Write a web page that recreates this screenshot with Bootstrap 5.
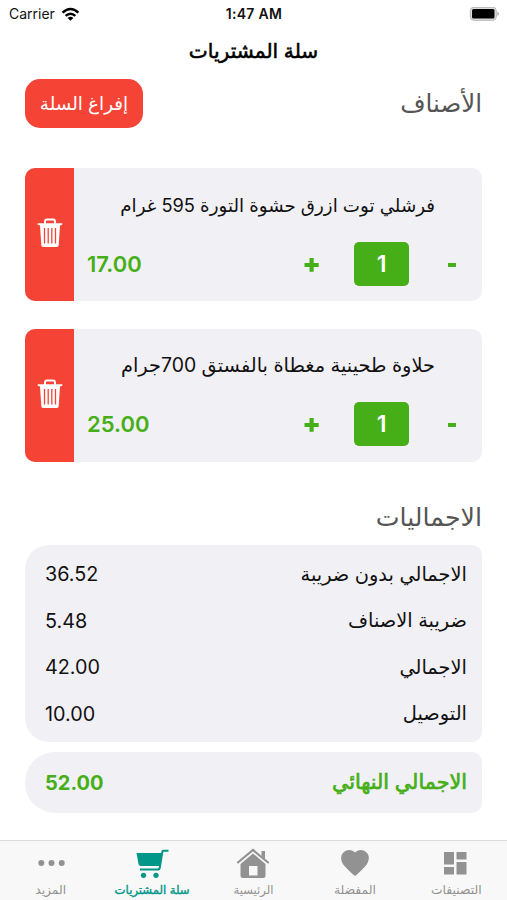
<!DOCTYPE html>
<html lang="ar" dir="rtl">
<head>
<meta charset="utf-8">
<meta name="viewport" content="width=device-width, initial-scale=1">
<title>سلة المشتريات</title>
<link href="https://cdn.jsdelivr.net/npm/bootstrap@5.3.0/dist/css/bootstrap.min.css" rel="stylesheet">
<style>
body{font-family:Inter,"DejaVu Sans",sans-serif;height:900px;color:#111;background:#fff;overflow:hidden;line-height:1}
svg{display:block;flex:none}
.statusbar{height:28px;font-size:14px;padding:0 8px 0 9px}
.statusbar>div{flex:1 1 0}
.carrier{gap:6px}
.clock{letter-spacing:.3px}
.page-title{height:47px;font-size:20.2px;font-weight:400;color:#000;-webkit-text-stroke:.55px currentColor}
.content{padding:4px 25px 0}
.section-title{font-size:24.5px;color:#555;font-weight:400}
.summary-title{height:83px;padding-top:27px;font-size:25.3px}
.btn-empty{width:118px;height:49px;border-radius:15px;background:#f54336;color:#fff;font-size:18.4px;padding:0}
.btn-empty:hover{background:#e03a2e;color:#fff}
.item{height:133px;background:#f1f0f5;border-radius:10px;overflow:hidden;margin-top:40px}
.item+.item{margin-top:28px}
.item-name{height:74px;font-size:18.25px;padding:1px 47px 0 0;white-space:nowrap}
.item+.item .item-name{height:73px;font-size:19.4px}
.item-controls{height:44px;padding:0 22px 0 13px}
.remove{width:49px;background:#f54336;border:0;padding:0 0 3px}
.step{width:16px;height:30px;border:0;background:none;padding:0;color:#46af18}
.qty{width:55px;height:44px;border-radius:5px;background:#46af18;color:#fff;font-size:23px;font-weight:600;margin:0 35px 0 34px}
.price{font-size:22px;font-weight:600;color:#46af18}
.totals,.final{background:#f1f0f5;padding:0 15px 0 20px}
.totals{height:197px;border-radius:24px 10px 10px 24px;padding-top:6px;font-size:19.4px}
.totals .line{height:46.5px}
.final{height:61px;border-radius:30px 10px 10px 30px;color:#46af18;font-size:20.7px;margin-top:10px}
.final .fit{-webkit-text-stroke:.7px currentColor}
.line bdi{font-size:19.8px;padding-top:2px}
.final bdi{font-size:20px;font-weight:700;padding-top:1px}
.fit{display:inline-block;white-space:nowrap;line-height:1.3}
.tabs{height:60px;background:#f8f8f8;border-top:1px solid #dcdcdc;color:#929292;font-size:12.3px}
.tabs a{color:inherit;text-decoration:none;padding-top:5px}
.tabs .fit{height:20px;line-height:20px}
.tabs a.home{font-size:11.6px}
.tabs a.current{color:#009688;font-size:11.7px}
.tabs a.current .fit{-webkit-text-stroke:.35px currentColor}
</style>
<script src="https://cdn.jsdelivr.net/npm/bootstrap@5.3.0/dist/js/bootstrap.bundle.min.js"></script>
</head>
<body class="d-flex flex-column">
<header>
  <div class="statusbar d-flex align-items-center" dir="ltr">
    <div class="carrier d-flex align-items-center"><span>Carrier</span>
      <svg width="19" height="15" viewBox="0 0 20 15"><g fill="none" stroke="#000" stroke-width="2.6"><path d="M1.7 5.5Q10-2 18.3 5.5"/><path d="M4.9 9Q10 4.3 15.1 9"/></g><path d="M7 11.2Q10 8.700 13 11.200L10 14.200Z"/></svg>
    </div>
    <div class="clock text-center fw-semibold">1:47 AM</div>
    <div class="d-flex justify-content-end"><svg width="30" height="15" viewBox="0 0 30 15"><rect x="1.300" y=".3" width="26" height="13" rx="3.5" fill="#ddd" stroke="#b5b5b5" stroke-width="1"/><rect x="3" y="2.1" width="22.500" height="9.4" rx="1.5"/><path d="M28.400 4.500v4.500q1.600-.8 1.600-2.250T28.400 4.500z" fill="#aaa"/></svg></div>
  </div>
  <h1 class="page-title d-flex justify-content-center align-items-center m-0"><span class="fit">سلة المشتريات</span></h1>
</header>
<main class="content flex-grow-1">
  <div class="d-flex justify-content-between align-items-center">
    <h2 class="section-title m-0"><span class="fit">الأصناف</span></h2>
    <button class="btn btn-empty"><span class="fit">إفراغ السلة</span></button>
  </div>
  <article class="item d-flex">
    <div class="flex-grow-1">
      <div class="item-name d-flex align-items-center"><span class="fit">فرشلي توت ازرق حشوة التورة 595 غرام</span></div>
      <div class="item-controls d-flex align-items-center">
        <button class="step" aria-label="إنقاص"><svg width="16" height="16"><path d="M4 7h8v4H4z" fill="currentColor"/></svg></button>
        <span class="qty d-flex align-items-center justify-content-center">1</span>
        <button class="step" aria-label="زيادة"><svg width="16" height="16"><path d="M.500 7h5V2h4.200V7h5v4h-5v4.800H5.500V11H.500z" fill="currentColor"/></svg></button>
        <bdi class="price me-auto">17.00</bdi>
      </div>
    </div>
    <button class="remove d-flex align-items-center justify-content-center" aria-label="حذف"><svg width="26" height="30" viewBox="0 0 26 30"><path d="M8 6V3.500Q8 1.500 10 1.500h6Q18 1.500 18 3.500V6" fill="none" stroke="#fff" stroke-width="2"/><path d="M.7 5.300h24.600v1.500l-2.300.8-1.300 19.600q-.1 1.800-2 1.800H6.300q-1.900 0-2-1.800L3 7.600.7 6.800z" fill="#fff"/><path d="M7.500 10v15.500M11.200 10v15.500M14.800 10v15.500M18.500 10v15.500" stroke="#f54336" stroke-width="1.300"/></svg></button>
  </article>
  <article class="item d-flex">
    <div class="flex-grow-1">
      <div class="item-name d-flex align-items-center"><span class="fit">حلاوة طحينية مغطاة بالفستق 700جرام</span></div>
      <div class="item-controls d-flex align-items-center">
        <button class="step" aria-label="إنقاص"><svg width="16" height="16"><path d="M4 7h8v4H4z" fill="currentColor"/></svg></button>
        <span class="qty d-flex align-items-center justify-content-center">1</span>
        <button class="step" aria-label="زيادة"><svg width="16" height="16"><path d="M.500 7h5V2h4.200V7h5v4h-5v4.800H5.500V11H.500z" fill="currentColor"/></svg></button>
        <bdi class="price me-auto">25.00</bdi>
      </div>
    </div>
    <button class="remove d-flex align-items-center justify-content-center" aria-label="حذف"><svg width="26" height="30" viewBox="0 0 26 30"><path d="M8 6V3.500Q8 1.500 10 1.500h6Q18 1.500 18 3.500V6" fill="none" stroke="#fff" stroke-width="2"/><path d="M.7 5.300h24.600v1.500l-2.300.8-1.300 19.600q-.1 1.800-2 1.800H6.300q-1.900 0-2-1.800L3 7.600.7 6.800z" fill="#fff"/><path d="M7.500 10v15.500M11.200 10v15.500M14.800 10v15.500M18.500 10v15.500" stroke="#f54336" stroke-width="1.300"/></svg></button>
  </article>
  <h2 class="section-title summary-title d-flex align-items-center m-0"><span class="fit">الاجماليات</span></h2>
  <section class="totals">
    <div class="line d-flex justify-content-between align-items-center"><span class="fit">الاجمالي بدون ضريبة</span><bdi>36.52</bdi></div>
    <div class="line d-flex justify-content-between align-items-center"><span class="fit">ضريبة الاصناف</span><bdi>5.48</bdi></div>
    <div class="line d-flex justify-content-between align-items-center"><span class="fit">الاجمالي</span><bdi>42.00</bdi></div>
    <div class="line d-flex justify-content-between align-items-center"><span class="fit">التوصيل</span><bdi>10.00</bdi></div>
  </section>
  <section class="final d-flex justify-content-between align-items-center"><span class="fit">الاجمالي النهائي</span><bdi>52.00</bdi></section>
</main>
<nav class="tabs row g-0 flex-nowrap text-center">
  <a href="#" class="col d-flex flex-column align-items-center"><svg width="34" height="34" viewBox="0 0 34 34" fill="currentColor"><path d="M5 6h10v12.500H5zM17.500 6h10v7.500h-10zM5 21h10v7.500H5zM17.500 16h10v12.500h-10z"/></svg><span class="fit">التصنيفات</span></a>
  <a href="#" class="col d-flex flex-column align-items-center"><svg width="34" height="34" viewBox="0 0 34 34" fill="currentColor"><path d="M17 30Q14 28 7 20.500C3 16.500 2 11 4.500 7.500 8 3 14 3 17 6.500c3-3.500 9-3.500 12.500 1C32 11 31 16.500 27 20.500Q20 28 17 30z"/></svg><span class="fit">المفضلة</span></a>
  <a href="#" class="col d-flex flex-column align-items-center home"><svg width="34" height="34" viewBox="0 0 34 34" fill="currentColor"><path d="M1.300 17 17 4l15.700 13" fill="none" stroke="currentColor" stroke-width="2.200"/><path d="M25.500 5h3.500v8l-3.500-3zM17 7.500l12.500 10.500V29.500q0 2.500-2.500 2.500H7q-2.500 0-2.500-2.500V18zM13 20v9.500h8.500V20z" fill-rule="evenodd"/></svg><span class="fit">الرئيسية</span></a>
  <a href="#" class="col d-flex flex-column align-items-center current"><svg width="34" height="34" viewBox="0 0 34 34" fill="currentColor"><path d="M1.500 7H27l-2 13H5.800Q4 20 3.500 18z"/><path d="M33.500 4.800h-5.300Q27.500 4.800 27.300 6L24.800 21.500q-.3 2-2.300 2H5" fill="none" stroke="currentColor" stroke-width="2"/><circle cx="8.500" cy="29.300" r="2.600"/><circle cx="21" cy="29.300" r="2.600"/></svg><span class="fit">سلة المشتريات</span></a>
  <a href="#" class="col d-flex flex-column align-items-center"><svg width="34" height="34" viewBox="0 0 34 34" fill="currentColor"><circle cx="7.300" cy="17" r="3"/><circle cx="17.500" cy="17" r="3"/><circle cx="27.700" cy="17" r="3"/></svg><span class="fit">المزيد</span></a>
</nav>
</body>
</html>
